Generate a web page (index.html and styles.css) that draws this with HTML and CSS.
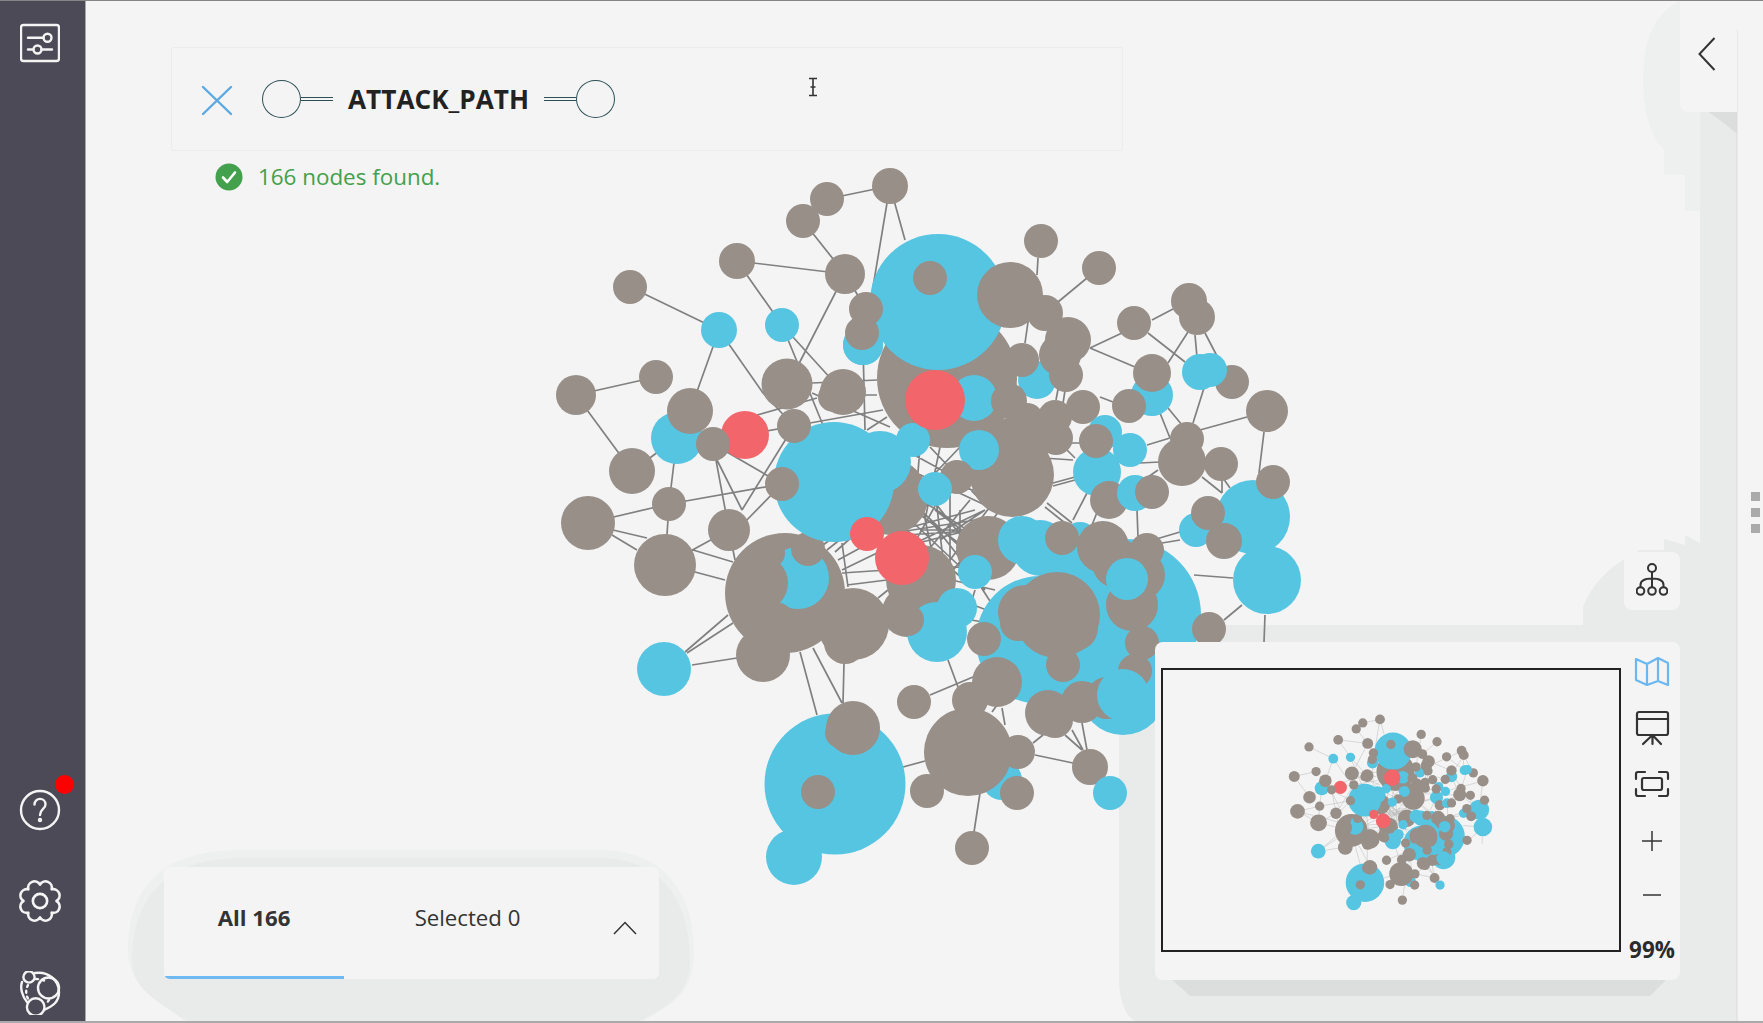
FILE: index.html
```html
<!DOCTYPE html>
<html lang="en">
<head>
<meta charset="utf-8">
<title>ATTACK_PATH</title>
<link rel="stylesheet" href="styles.css">
</head>
<body>
<div class="app">
  <nav class="sidebar">
    <svg class="side-icon" width="40" height="40" viewBox="20 23 40 40">
      <rect x="21" y="25" width="38" height="36" rx="2.5"/>
      <path d="M28 37.7H43.5M28 49.5H33.5M41.5 49.5H52"/>
      <circle cx="47.5" cy="37.7" r="4"/>
      <circle cx="37.5" cy="49.5" r="4"/>
    </svg>
    <div class="side-bottom">
      <div class="help">
        <svg class="side-icon" width="42" height="42" viewBox="-21 -21 42 42">
          <circle r="19"/>
          <path d="M-5.5 -5.5C-5.5 -13 5.5 -13 5.5 -5.5C5.5 -1 0 -1 0 5"/>
          <circle cy="10" r="1"/>
        </svg>
        <span class="badge"></span>
      </div>
      <svg class="side-icon" width="44" height="44" viewBox="-20 -20 40 40">
        <path d="M0 -15A5.8 5.8 0 0 1 10.6 -10.6A5.8 5.8 0 0 1 15 0A5.8 5.8 0 0 1 10.6 10.6A5.8 5.8 0 0 1 0 15A5.8 5.8 0 0 1 -10.6 10.6A5.8 5.8 0 0 1 -15 0A5.8 5.8 0 0 1 -10.6 -10.6A5.8 5.8 0 0 1 0 -15Z"/>
        <circle r="6.5"/>
      </svg>
      <svg class="side-icon" width="44" height="44" viewBox="18 971 44 44">
        <path d="M35 973C48 971 59 980 59 992C59 1002 53 1006 44 1010M27 1002C22 996 20 988 22 982"/>
        <path class="dots" d="M36 979C42 979 44 981 46 981M28 985C25 991 26 996 29 1000M49 1000L46 1004"/>
        <circle cx="29" cy="977" r="5.6"/>
        <circle cx="48.5" cy="988" r="10.5"/>
        <circle cx="35.7" cy="1007" r="8.8"/>
      </svg>
    </div>
  </nav>
  <main class="stage">
    <svg class="canvas" viewBox="86 1 1677 1020" width="1677" height="1020">
      <path class="blob-soft" d="M1680 1C1655 12 1643 40 1643 80C1643 110 1650 135 1664 150V175H1685V211H1700V300H1737V1Z"/>
      <path class="blob" d="M1700 211V543L1685 535V545L1664 539V550H1640C1610 565 1591 585 1583 607V625H1190C1150 625 1119 640 1119 665V980C1119 1000 1127 1021 1137 1021H1737V112H1700Z"/>
      <path class="blob-soft" d="M128 950C128 890 160 850 240 850H600C670 850 694 900 694 950C694 990 680 1000 643 1021H184C160 1000 128 990 128 950Z"/>
      <path class="blob" d="M132 960C132 900 165 858 240 858H600C665 858 690 905 690 960C690 990 675 1003 640 1021H187C160 1003 132 990 132 960Z"/>
      <path class="blob-dark" d="M1170 978H1668L1650 996H1190Z"/>
      <path class="blob-dark" d="M1706 110H1737V134L1725 124Z"/>
      <path class="blob-edge" d="M1737 30V1021"/>
      <g id="network">
        <path class="edges" d="M890 186L827 199M803 221L845 274M887 203L873 287M890 186L905 240M737 261L845 274M737 261L782 325M630 287L719 330M845 274L788 385M845 274L866 309M719 330L690 411M719 330L763 393L794 426M782 325L825 430M782 325L843 392M656 377L576 395M576 395L632 471M632 471L677 438M677 438L669 504M863 345L865 430M812 383L877 380M812 393L890 427M820 395L877 395M757 415L817 398M713 444L745 435M794 426L745 435M810 423L883 410M867 430L887 417M713 444L782 484M713 444L729 530M717 460L742 510M794 426L742 510M782 484L742 525M669 504L782 484M588 523L669 504M669 504L665 565M613 530L647 538M612 535L637 550M665 565L729 530M693 550L733 562M695 572L725 580M729 530L735 560M685 652L728 615M687 653L733 623M692 665L737 658M800 652L817 715M813 648L842 703M844 663L843 703M903 767L925 761M930 695L973 677M948 660L958 687M1035 755L1073 763M1033 743L1043 735M1065 735L1082 750M1072 730L1083 750M1082 723L1087 750M980 793L974 832M1002 708L1005 725M992 712L997 705M1081 658L1081 673M1088 653L1085 677M1037 275L1038 258M1058 302L1087 278M1025 343L1028 322M1090 348L1122 333M1090 348L1135 367M1152 320L1173 309M1148 333L1185 362M1168 363L1188 332M1195 335L1197 357M1205 333L1218 358M1204 388L1193 423M1200 430L1247 417M1264 432L1259 473M1100 397L1113 402M1160 413L1170 438M1168 408L1182 425M1147 445L1170 438M1070 443L1080 443M1067 450L1075 458M1043 458L1073 460M1053 483L1075 477M1053 486L1075 480M1073 520L1087 493M1137 510L1138 537M1140 463L1160 462M1148 477L1158 470M1202 477L1222 493M1222 480L1222 493M1223 478L1230 488M1153 540L1180 532M1162 543L1180 540M1194 575L1233 578M1224 620L1242 605M1265 615L1264 642M1045 507L1070 527M1047 503L1072 523M1090 530L1098 510M1066 384L1062 410M1059 384L1056 400"/>
        <path class="edges" d="M912 494L990 545M905 515L985 590M900 530L975 510M920 495L942 600M935 490L946 585M945 488L905 560M965 485L915 512M975 520L900 532M985 510L905 548M1000 510L930 600M915 505L985 570M925 490L980 560M950 480L950 590M970 500L920 560M905 535L985 530M910 545L990 525M925 565L1000 570M930 575L995 590M960 600L1000 615M970 570L1015 640M930 520L985 590M975 590L960 640M960 618L1000 625M900 500L975 555M895 520L970 585M1000 600L1030 660M1010 600L985 670M842 543L848 587M842 570L877 553M842 573L887 570M847 585L887 580M878 598L888 590M827 550L842 538M823 545L850 525M835 552L862 528M838 560L875 540M1040 590L1060 640M1080 650L1065 690M1060 640L1090 720M905 450L960 480M920 447L915 510M940 447L925 520M960 447L900 510M975 460L905 500M930 447L990 510M910 470L985 505M905 480L975 490M960 510L960 570M935 510L975 540M920 530L975 530M940 540L985 510M950 560L995 500M915 550L950 610"/>
        <circle class="g" cx="947" cy="378" r="70"/>
        <circle class="g" cx="890" cy="497" r="38"/>
        <circle class="g" cx="921" cy="580" r="35"/>
        <circle class="g" cx="907" cy="612" r="25"/>
        <circle class="g" cx="1012" cy="475" r="42"/>
        <circle class="g" cx="1010" cy="440" r="22"/>
        <circle class="g" cx="1027" cy="420" r="17"/>
        <circle class="g" cx="1040" cy="438" r="17"/>
        <circle class="g" cx="1055" cy="417" r="17"/>
        <circle class="g" cx="1056" cy="438" r="17"/>
        <circle class="g" cx="785" cy="593" r="60"/>
        <circle class="b" cx="798" cy="578" r="31"/>
        <circle class="g" cx="760" cy="583" r="28"/>
        <circle class="g" cx="770" cy="553" r="15"/>
        <circle class="g" cx="775" cy="622" r="20"/>
        <circle class="g" cx="808" cy="549" r="17"/>
        <circle class="g" cx="763" cy="655" r="27"/>
        <circle class="g" cx="853" cy="624" r="36"/>
        <circle class="g" cx="845" cy="643" r="21"/>
        <circle class="b" cx="863" cy="345" r="20"/>
        <circle class="b" cx="1037" cy="380" r="19"/>
        <circle class="b" cx="1125" cy="615" r="76"/>
        <circle class="b" cx="1040" cy="640" r="64"/>
        <circle class="b" cx="1060" cy="562" r="24"/>
        <circle class="b" cx="1123" cy="692" r="43"/>
        <circle class="b" cx="1002" cy="780" r="20"/>
        <circle class="b" cx="835" cy="784" r="70.5"/>
        <circle class="b" cx="794" cy="857" r="28"/>
        <circle class="b" cx="938" cy="302" r="68"/>
        <circle class="g" cx="930" cy="278" r="17"/>
        <circle class="g" cx="1010" cy="295" r="33"/>
        <circle class="g" cx="1045" cy="313" r="18"/>
        <circle class="g" cx="1068" cy="340" r="23"/>
        <circle class="g" cx="1060" cy="355" r="21"/>
        <circle class="g" cx="1066" cy="375" r="17"/>
        <circle class="g" cx="1022" cy="360" r="17"/>
        <circle class="b" cx="974" cy="398" r="23"/>
        <circle class="g" cx="1009" cy="401" r="18"/>
        <circle class="b" cx="979" cy="450" r="20"/>
        <circle class="b" cx="834" cy="482" r="60"/>
        <circle class="b" cx="880" cy="462" r="31"/>
        <circle class="b" cx="913" cy="440" r="17"/>
        <circle class="g" cx="957" cy="477" r="17"/>
        <circle class="b" cx="935" cy="489" r="17"/>
        <circle class="r" cx="935" cy="400" r="30"/>
        <circle class="g" cx="890" cy="186" r="18"/>
        <circle class="g" cx="827" cy="199" r="17"/>
        <circle class="g" cx="803" cy="221" r="17"/>
        <circle class="g" cx="737" cy="261" r="18"/>
        <circle class="g" cx="845" cy="274" r="20"/>
        <circle class="g" cx="630" cy="287" r="17"/>
        <circle class="b" cx="719" cy="330" r="18"/>
        <circle class="b" cx="782" cy="325" r="17"/>
        <circle class="b" cx="863" cy="345" r="20"/>
        <circle class="g" cx="866" cy="309" r="17"/>
        <circle class="g" cx="862" cy="333" r="17"/>
        <circle class="g" cx="656" cy="377" r="17"/>
        <circle class="g" cx="576" cy="395" r="20"/>
        <circle class="g" cx="787" cy="384" r="25.5"/>
        <circle class="g" cx="843" cy="392" r="23"/>
        <circle class="g" cx="833" cy="397" r="15"/>
        <circle class="b" cx="677" cy="438" r="26"/>
        <circle class="g" cx="690" cy="411" r="23"/>
        <circle class="r" cx="745" cy="435" r="24"/>
        <circle class="g" cx="713" cy="444" r="17"/>
        <circle class="g" cx="794" cy="426" r="17"/>
        <circle class="g" cx="632" cy="471" r="23"/>
        <circle class="g" cx="782" cy="484" r="17"/>
        <circle class="g" cx="669" cy="504" r="17"/>
        <circle class="g" cx="588" cy="523" r="27"/>
        <circle class="g" cx="729" cy="530" r="21"/>
        <circle class="g" cx="665" cy="565" r="31"/>
        <circle class="b" cx="664" cy="669" r="27"/>
        <circle class="r" cx="867" cy="534" r="17"/>
        <circle class="r" cx="902" cy="558" r="27"/>
        <circle class="g" cx="908" cy="620" r="16"/>
        <circle class="b" cx="937" cy="632" r="30"/>
        <circle class="b" cx="957" cy="608" r="20"/>
        <circle class="g" cx="908" cy="620" r="16"/>
        <circle class="g" cx="988" cy="548" r="32"/>
        <circle class="b" cx="975" cy="572" r="17"/>
        <circle class="b" cx="1022" cy="540" r="24"/>
        <circle class="b" cx="1040" cy="548" r="28"/>
        <circle class="b" cx="1080" cy="540" r="18"/>
        <circle class="g" cx="1062" cy="538" r="17"/>
        <circle class="g" cx="1103" cy="547" r="26"/>
        <circle class="g" cx="1117" cy="563" r="25"/>
        <circle class="g" cx="1140" cy="575" r="25"/>
        <circle class="g" cx="1147" cy="550" r="17"/>
        <circle class="g" cx="1132" cy="605" r="26"/>
        <circle class="b" cx="1127" cy="579" r="21"/>
        <circle class="g" cx="1142" cy="643" r="17"/>
        <circle class="g" cx="1135" cy="671" r="17"/>
        <circle class="g" cx="1057" cy="615" r="43"/>
        <circle class="g" cx="1025" cy="612" r="27"/>
        <circle class="g" cx="1018" cy="623" r="18"/>
        <circle class="g" cx="1075" cy="628" r="23"/>
        <circle class="g" cx="1063" cy="665" r="17"/>
        <circle class="g" cx="984" cy="639" r="17"/>
        <circle class="g" cx="1107" cy="698" r="21"/>
        <circle class="g" cx="1082" cy="702" r="21"/>
        <circle class="g" cx="1048" cy="713" r="23"/>
        <circle class="g" cx="1055" cy="720" r="18"/>
        <circle class="b" cx="1123" cy="695" r="26"/>
        <circle class="g" cx="997" cy="682" r="25"/>
        <circle class="g" cx="970" cy="700" r="18"/>
        <circle class="g" cx="914" cy="702" r="17"/>
        <circle class="g" cx="968" cy="752" r="44"/>
        <circle class="g" cx="1018" cy="752" r="17"/>
        <circle class="g" cx="1017" cy="793" r="17"/>
        <circle class="g" cx="927" cy="791" r="17"/>
        <circle class="g" cx="853" cy="728" r="27"/>
        <circle class="g" cx="840" cy="733" r="15"/>
        <circle class="g" cx="818" cy="792" r="17"/>
        <circle class="g" cx="972" cy="848" r="17"/>
        <circle class="g" cx="1090" cy="767" r="18"/>
        <circle class="b" cx="1110" cy="793" r="17"/>
        <circle class="g" cx="1041" cy="241" r="17"/>
        <circle class="g" cx="1099" cy="268" r="17"/>
        <circle class="g" cx="1134" cy="323" r="17"/>
        <circle class="g" cx="1189" cy="301" r="18"/>
        <circle class="g" cx="1197" cy="317" r="18"/>
        <circle class="b" cx="1152" cy="395" r="21"/>
        <circle class="g" cx="1152" cy="373" r="19"/>
        <circle class="g" cx="1129" cy="406" r="17"/>
        <circle class="g" cx="1083" cy="407" r="17"/>
        <circle class="g" cx="1232" cy="382" r="17"/>
        <circle class="b" cx="1200" cy="372" r="18"/>
        <circle class="b" cx="1210" cy="370" r="17"/>
        <circle class="g" cx="1267" cy="411" r="21"/>
        <circle class="b" cx="1105" cy="432" r="17"/>
        <circle class="b" cx="1130" cy="450" r="17"/>
        <circle class="b" cx="1097" cy="472" r="24"/>
        <circle class="g" cx="1096" cy="441" r="17"/>
        <circle class="g" cx="1187" cy="439" r="17"/>
        <circle class="g" cx="1182" cy="462" r="24"/>
        <circle class="g" cx="1221" cy="464" r="17"/>
        <circle class="g" cx="1109" cy="500" r="19"/>
        <circle class="b" cx="1135" cy="493" r="18"/>
        <circle class="g" cx="1152" cy="492" r="17"/>
        <circle class="b" cx="1253" cy="517" r="37"/>
        <circle class="g" cx="1273" cy="482" r="17"/>
        <circle class="b" cx="1196" cy="530" r="17"/>
        <circle class="g" cx="1224" cy="541" r="18"/>
        <circle class="g" cx="1208" cy="513" r="17"/>
        <circle class="b" cx="1267" cy="580" r="34"/>
        <circle class="g" cx="1209" cy="629" r="17"/>
      </g>
    </svg>

    <section class="search">
      <svg class="close" width="32" height="31" viewBox="0 0 32 31"><path d="M2 2L30 29M30 2L2 29"/></svg>
      <span class="rel-end left">
        <span class="rel-node"></span><span class="rel-line"></span>
      </span>
      <strong class="rel-name">ATTACK_PATH</strong>
      <span class="rel-end">
        <span class="rel-line"></span><span class="rel-node"></span>
      </span>
    </section>
    <p class="status">
      <svg width="28" height="28" viewBox="0 0 28 28"><circle cx="14" cy="14" r="13.5"/><path d="M8 14.5L12.2 19L20 9.5"/></svg>
      <span>166 nodes found.</span>
    </p>
    <svg class="cursor" width="12" height="20" viewBox="0 0 12 20"><path d="M2 1.5H10M2 18.5H10M6 1.5V18.5M3.5 10H8.5"/></svg>

    <section class="tabs">
      <div class="tab active">All 166</div>
      <div class="tab">Selected 0</div>
      <svg class="chev-up" width="24" height="14" viewBox="0 0 24 14"><path d="M1 13L12 1.5L23 13"/></svg>
    </section>

    <button class="collapse" aria-label="Collapse">
      <svg width="18" height="34" viewBox="0 0 18 34"><path d="M16.5 1L1.5 17L16.5 33"/></svg>
    </button>

    <button class="org" aria-label="Layout">
      <svg width="32" height="36" viewBox="0 0 32 36"><circle cx="16" cy="5" r="4"/><path d="M16 9V24M4.5 24V22C4.5 17 10 15.5 16 15.5C22 15.5 27.5 17 27.5 22V24"/><circle cx="4.5" cy="28" r="3.8"/><circle cx="16" cy="28" r="3.8"/><circle cx="27.5" cy="28" r="3.8"/></svg>
    </button>

    <section class="minimap">
      <div class="mini-frame">
        <svg class="mini-graph" viewBox="1163 670 456 280" width="456" height="280"><use href="#network" transform="translate(1137 668.6) scale(.273)"/></svg>
      </div>
      <div class="mini-tools">
        <svg class="tool map" width="36" height="30" viewBox="0 0 36 30"><path d="M2 3L13 8L24 2L34 7V29L24 25L13 29L2 24ZM13 8V29M24 2V25"/></svg>
        <svg class="tool" width="36" height="36" viewBox="0 0 36 36"><rect x="3" y="2" width="31" height="23" rx="2"/><path d="M3 9H34M18.5 25L9 34M18.5 25L27 34M18.5 25V34"/></svg>
        <svg class="tool" width="36" height="28" viewBox="0 0 36 28"><path d="M2 9V4Q2 2 4 2H11M25 2H32Q34 2 34 4V9M34 19V24Q34 26 32 26H25M11 26H4Q2 26 2 24V19"/><rect x="8" y="8" width="20" height="12" rx="2"/></svg>
        <svg class="tool thin" width="22" height="22" viewBox="0 0 22 22"><path d="M1 11H21M11 1V21"/></svg>
        <svg class="tool thin" width="20" height="2" viewBox="0 0 20 2"><path d="M1 1H19"/></svg>
        <span class="zoom">99%</span>
      </div>
    </section>

    <div class="grip"><i></i><i></i><i></i></div>
  </main>
</div>
</body>
</html>
```
FILE: styles.css
```css
* { box-sizing: border-box; }
html, body { margin: 0; height: 100%; }
body { font-family: "Open Sans", "Noto Sans", sans-serif; background: #f4f4f4; color: #2b2b2b; overflow: hidden; }

.app { display: flex; height: 100vh; border-top: 1px solid #858585; border-bottom: 2px solid #aaaaaa; }

.sidebar { width: 86px; flex: none; background: #4c4a56; border-right: 1px solid #a8a8a8; padding: 22px 6px 6px 0; display: flex; flex-direction: column; align-items: center; justify-content: space-between; }
.side-icon { display: block; fill: none; stroke: #f4f4f4; stroke-width: 2.4; stroke-linecap: round; stroke-linejoin: round; }
.side-icon .dots { stroke-dasharray: 2 4; }
.side-bottom { display: flex; flex-direction: column; align-items: center; gap: 48px; }
.help { position: relative; }
.badge { position: absolute; top: -14px; right: -13px; width: 19px; height: 19px; border-radius: 50%; background: #ff0000; }

.stage { position: relative; flex: 1; overflow: hidden; }
.canvas { position: absolute; left: 0; top: 0; display: block; }
.blob { fill: #e9ebea; }
.blob-soft { fill: #eef0ef; }
.blob-dark { fill: #dcdedd; }
.blob-edge { stroke: #d9dbda; stroke-width: 1; fill: none; }
.edges { fill: none; stroke: var(--edge, #808080); stroke-width: 1.7; }
.g { fill: #978f88; }
.b { fill: #56c5e2; }
.r { fill: #f2656a; }

.search { position: absolute; left: 85px; top: 46px; width: 952px; height: 104px; background: #f4f4f4; border: 1px solid #ececec; border-radius: 2px; display: flex; align-items: center; padding-left: 29px; }
.close { fill: none; stroke: #5aa9e3; stroke-width: 2.4; margin-top: 3px; margin-right: 29px; }
.close path { stroke-linecap: round; }
.rel-end { display: flex; align-items: center; }
.rel-end.left { margin-right: 15px; }
.rel-node { width: 39px; height: 38px; border: 1px solid #2d4f55; border-radius: 50%; }
.rel-line { width: 32px; height: 4px; border-top: 1px solid #2d4f55; border-bottom: 1px solid #2d4f55; }
.rel-name { width: 180px; font-size: 26.2px; font-weight: 700; line-height: 36px; color: #222; margin-right: 16px; }

.status { position: absolute; left: 129px; top: 162px; margin: 0; display: flex; align-items: center; gap: 15px; font-size: 22.4px; line-height: 28px; color: #43a04c; }
.status svg { display: block; }
.status circle { fill: #43a04c; }
.status path { fill: none; stroke: #fff; stroke-width: 2.6; stroke-linecap: round; stroke-linejoin: round; }

.cursor { position: absolute; left: 721px; top: 76px; fill: none; stroke: #333; stroke-width: 1.6; }

.tabs { position: absolute; left: 78px; top: 866px; width: 495px; height: 112px; background: #f4f4f4; border-radius: 6px; display: flex; overflow: hidden; }
.tab { width: 180px; height: 112px; padding-top: 36px; text-align: center; font-size: 22.2px; line-height: 30px; color: #333; }
.tab + .tab { width: 250px; padding-right: 3px; }
.tab.active { font-weight: 700; border-bottom: 3px solid #6db9f2; }
.chev-up { position: absolute; right: 22px; top: 54px; fill: none; stroke: #333; stroke-width: 1.5; }

.collapse { position: absolute; left: 1594px; top: -1px; width: 57px; height: 112px; padding: 0 0 0 18px; border: 0; background: #f4f4f4; border-bottom-left-radius: 8px; text-align: left; }
.collapse svg { display: block; margin-top: -4px; fill: none; stroke: #333; stroke-width: 2; }

.org { position: absolute; left: 1538px; top: 551px; width: 56px; height: 58px; padding: 0; border: 0; background: #f4f4f4; border-radius: 8px; display: flex; align-items: center; justify-content: center; }
.org svg { fill: none; stroke: #333; stroke-width: 2; }

.minimap { position: absolute; left: 1069px; top: 641px; width: 525px; height: 338px; background: #f4f4f4; border-radius: 8px; display: flex; align-items: flex-start; padding: 26px 0 0 6px; }
.mini-frame { width: 460px; height: 284px; border: 2px solid #222; background: #f4f4f4; overflow: hidden; flex: none; }
.mini-graph { display: block; --edge: #b4b4b4; }
.mini-tools { flex: 1; display: flex; flex-direction: column; align-items: center; margin-top: -11px; padding-left: 3px; }
.tool { display: block; fill: none; stroke: #333; stroke-width: 2.2; stroke-linejoin: round; stroke-linecap: round; }
.tool.map { stroke: #6bb8f0; margin-top: -1px; }
.tool:nth-child(2) { margin-top: 24px; }
.tool:nth-child(3) { margin-top: 24px; }
.tool:nth-child(4) { margin-top: 32px; }
.tool:nth-child(5) { margin-top: 42px; }
.tool.thin { stroke-width: 1.5; stroke-linecap: butt; }
.zoom { margin-top: 39px; font-size: 22.4px; line-height: 30px; font-weight: 700; color: #2b2b2b; }

.grip { position: absolute; left: 1665px; top: 491px; display: flex; flex-direction: column; gap: 7px; }
.grip i { display: block; width: 9px; height: 9px; background: #aaaaaa; }
```
